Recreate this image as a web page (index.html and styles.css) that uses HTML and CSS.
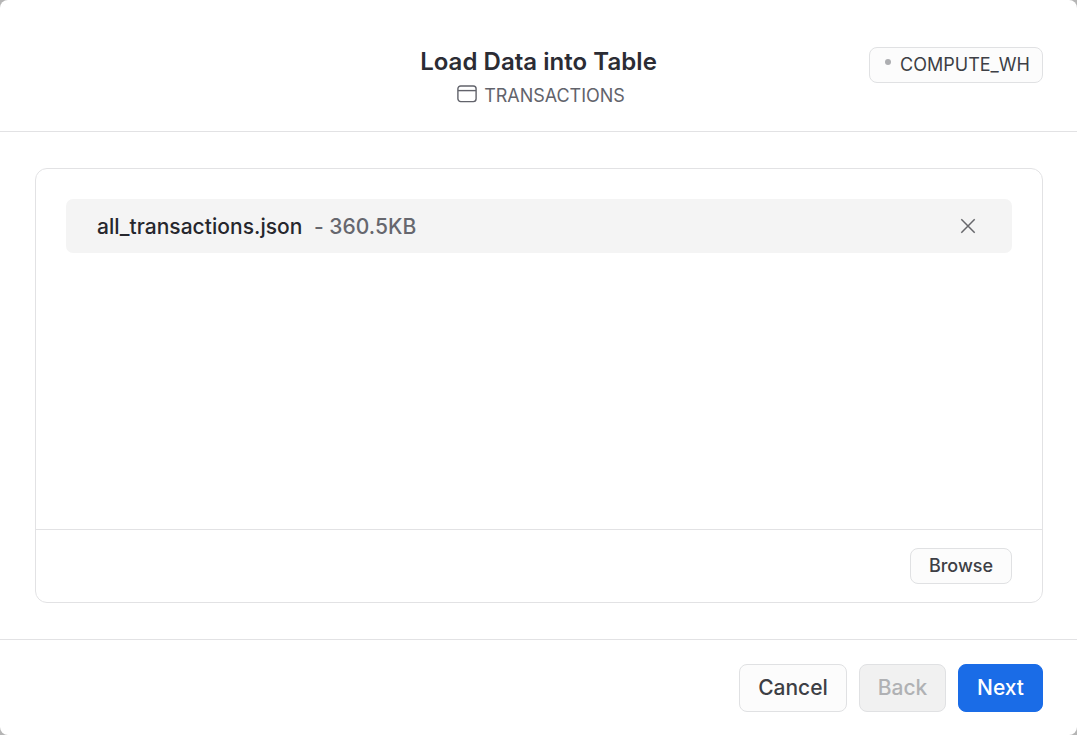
FILE: index.html
```html
<!DOCTYPE html>
<html lang="en">
<head>
<meta charset="utf-8">
<title>Load Data into Table</title>
<link rel="stylesheet" href="styles.css">
</head>
<body>
<div class="dialog" role="dialog">
  <header class="header">
    <div class="heading">
      <h1 class="title">Load Data into Table</h1>
      <div class="subtitle">
        <svg class="table-icon" width="20" height="18" viewBox="0 0 20 18" fill="none" stroke="currentColor" stroke-width="1.4"><rect x=".9" y="1" width="18.2" height="15.6" rx="2.8"/><path d="M1 5.6h18"/></svg>
        <span>TRANSACTIONS</span>
      </div>
    </div>
    <button class="button warehouse"><span class="dot"></span><span class="warehouse-name">COMPUTE_WH</span></button>
  </header>
  <main class="content">
    <section class="panel">
      <div class="files">
        <div class="file">
          <span class="file-name">all_transactions.json</span>
          <span class="file-size">- 360.5KB</span>
          <svg class="close" width="16" height="16" viewBox="0 0 16 16" fill="none" stroke="currentColor" stroke-width="1.5"><path d="M1.3 1.3l13.4 13.4M14.7 1.3L1.3 14.7"/></svg>
        </div>
      </div>
      <div class="panel-footer"><button class="button browse">Browse</button></div>
    </section>
  </main>
  <footer class="footer">
    <button class="button cancel">Cancel</button>
    <button class="button back" disabled>Back</button>
    <button class="button next">Next</button>
  </footer>
</div>
</body>
</html>
```
FILE: styles.css
```css
* { box-sizing: border-box; }
body { margin: 0; background: #b5b5b5; font-family: Inter, sans-serif; }
.dialog {
  display: flex;
  flex-direction: column;
  width: 1077px;
  height: 735px;
  background: #fff;
  border-radius: 8px;
  overflow: hidden;
}
.header {
  display: grid;
  grid-template-columns: 1fr auto 1fr;
  align-items: start;
  height: 132px;
  padding: 47px 34px 0;
  border-bottom: 1px solid #e2e2e4;
}
.heading { grid-column: 2; text-align: center; }
.title { margin: 0; font-size: 24px; font-weight: 600; line-height: 30px; letter-spacing: .04px; color: #2b2c34; }
.subtitle {
  display: flex;
  justify-content: center;
  align-items: center;
  gap: 7px;
  margin-top: 7px;
  padding-left: 5px;
  font-size: 18px;
  line-height: 24px;
  letter-spacing: -.04px;
  color: #62636b;
}
.table-icon { display: block; margin-top: -4px; }
.button {
  display: flex;
  align-items: center;
  justify-content: center;
  padding: 0 0 2px;
  border: 1px solid #e0e1e3;
  border-radius: 8px;
  background: #fcfcfc;
  color: #3d3f45;
  font-family: inherit;
  font-weight: 500;
}
.warehouse {
  justify-self: end;
  gap: 9px;
  width: 174px;
  height: 36px;
  padding-left: 3px;
  font-size: 18px;
  font-weight: 400;
}
.dot { width: 6px; height: 6px; margin-top: -5px; border-radius: 50%; background: #adaeb1; }
.content { padding: 36px 34px 36px 35px; }
.panel {
  display: flex;
  flex-direction: column;
  height: 435px;
  border: 1px solid #e2e2e4;
  border-radius: 12px;
}
.files { flex: 1; padding: 30px; }
.file {
  display: flex;
  align-items: center;
  height: 54px;
  padding: 0 36px 0 31px;
  border-radius: 7px;
  background: #f4f4f4;
  font-size: 21px;
  font-weight: 500;
  letter-spacing: .03px;
}
.file-name { color: #26272d; }
.file-size { margin-left: 11.5px; color: #66676e; }
.close { margin-left: auto; color: #66676b; }
.panel-footer {
  display: flex;
  justify-content: flex-end;
  height: 73px;
  padding: 18px 30px 0;
  border-top: 1px solid #e2e2e4;
}
.browse { width: 102px; height: 36px; font-size: 18px; }
.footer {
  display: flex;
  flex: 1;
  justify-content: flex-end;
  gap: 12px;
  padding: 24px 34px 0;
  border-top: 1px solid #e2e2e4;
}
.footer .button { height: 48px; font-size: 21px; }
.footer .cancel { width: 108px; }
.footer .back { width: 87px; background: #f1f1f1; color: #b0b1b4; }
.footer .next { width: 85px; border-color: #1a6ce7; background: #1a6ce7; color: #fff; }
```
